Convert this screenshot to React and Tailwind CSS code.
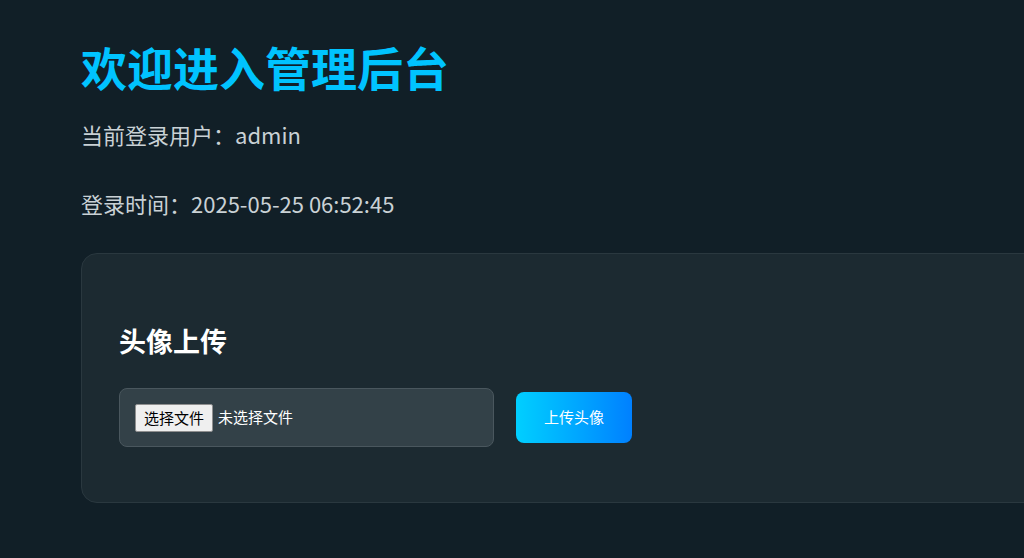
import React from 'react';

const App = () => {
  return (
    <div
      className="min-h-screen w-full overflow-hidden bg-[#111f27] text-[#c9d1d5]"
      style={{ fontFamily: '"Noto Sans CJK SC", "Noto Sans", sans-serif' }}
    >
      <div className="pl-[81px] pt-[38px] w-[1100px]">
        <h1 className="text-[46px] leading-[56px] font-bold text-[#00c3ff]">欢迎进入管理后台</h1>
        <p className="mt-[24px] text-[22px] leading-[33px]">当前登录用户：admin</p>
        <p className="mt-[36px] text-[22px] leading-[33px]">登录时间：2025-05-25 06:52:45</p>

        {/* Avatar upload card */}
        <div className="mt-[33px] w-[1000px] rounded-2xl border border-[#2a383f] bg-[#1c2a31] px-[37px] pt-[70px] pb-[55px]">
          <h3 className="text-[27px] leading-[34px] font-bold text-white">头像上传</h3>
          <div className="mt-[30px] flex items-center gap-[22px]">
            <label className="flex h-[59px] w-[375px] items-center rounded-lg border border-[#4a575e] bg-[#334148] px-[15px] cursor-pointer">
              <input type="file" accept="image/*" className="hidden" />
              <span className="rounded-[2px] border border-[#8f8f8f] bg-[#efefef] px-[8px] text-[15px] leading-[26px] text-black">
                选择文件
              </span>
              <span className="ml-[5px] text-[15px] text-white">未选择文件</span>
            </label>
            <button
              type="button"
              className="h-[51px] w-[116px] rounded-lg bg-gradient-to-r from-[#00cfff] to-[#0080ff] text-[15px] text-white"
            >
              上传头像
            </button>
          </div>
        </div>
      </div>
    </div>
  );
};

export default App;
